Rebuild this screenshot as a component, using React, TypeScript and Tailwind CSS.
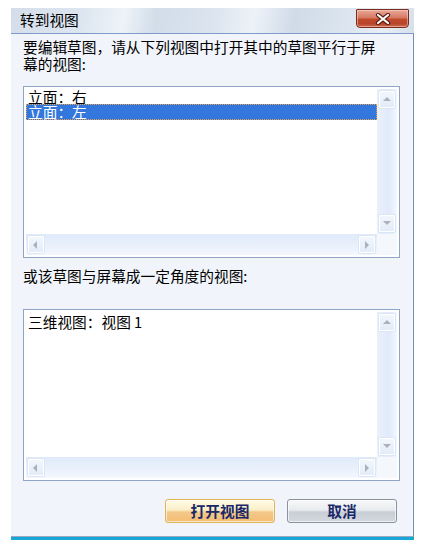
import React from "react";

const font = { fontFamily: '"Noto Sans CJK SC", "Noto Sans", sans-serif' };

function Arrow({ dir }: { dir: "up" | "down" | "left" | "right" }) {
  const pts =
    dir === "up"
      ? "1,6 5,2 9,6"
      : dir === "down"
      ? "1,2 5,6 9,2"
      : dir === "left"
      ? "6,1 2,5 6,9"
      : "3,1 7,5 3,9";
  return (
    <svg width="10" height="10" viewBox="0 0 10 10">
      <polygon points={pts} fill="#a9b1bd" />
    </svg>
  );
}

function SBtn({ dir }: { dir: "up" | "down" | "left" | "right" }) {
  return (
    <div className="w-[18px] h-[19px] rounded-[2px] border border-[#dbe6f5] bg-[linear-gradient(180deg,#f3f7fd_0%,#e2ebf8_100%)] shadow-[inset_0_0_0_1px_#ffffff] flex items-center justify-center">
      <Arrow dir={dir} />
    </div>
  );
}

function ListBox({ children }: { children: React.ReactNode }) {
  return (
    <div className="w-[377px] h-[172px] border border-[#8fa5c6] bg-white p-[2px] flex flex-col">
      <div className="flex flex-1 min-h-0">
        <div className="flex-1 flex flex-col">{children}</div>
        <div className="w-[20px] flex flex-col justify-between items-center bg-[linear-gradient(90deg,#eaf1fc_0%,#e0eafa_60%,#f4f8fe_100%)] py-[1px]">
          <SBtn dir="up" />
          <SBtn dir="down" />
        </div>
      </div>
      <div className="h-[21px] flex">
        <div className="flex-1 flex justify-between items-center px-[1px] bg-[linear-gradient(180deg,#e0eafa_0%,#eaf1fc_60%,#f4f8fe_100%)]">
          <SBtn dir="left" />
          <SBtn dir="right" />
        </div>
        <div className="w-[20px] bg-[#f4f7fb]" />
      </div>
    </div>
  );
}

export default function App() {
  return (
    <div className="w-[425px] h-[550px] bg-white pt-[8px] pl-[11px]" style={font}>
      <div className="w-[403px] flex flex-col">
        {/* title bar */}
        <div className="h-[26px] relative border-b border-[#7d9ccb] bg-[linear-gradient(100deg,#d4deea_0%,#dde6f0_18%,#eef3f8_28%,#d2dde9_36%,#dbe4ef_50%,#edf2f8_60%,#d0dbe8_70%,#dde6f0_84%,#e8eef5_92%,#d6e0eb_100%)]">
          <div className="pl-[9px] pt-[3px] text-[14.7px] leading-[18px] text-black">转到视图</div>
          <div className="absolute right-[5px] top-[1px] w-[53px] h-[19px] rounded-b-[4px] rounded-t-[1px] border border-[#7b2b1c] bg-[linear-gradient(180deg,#e7a899_0%,#d77a63_45%,#c04a2c_55%,#b8442a_80%,#cf6a4c_100%)] flex items-center justify-center shadow-[inset_0_0_0_1px_rgba(255,220,210,0.5)]">
            <svg width="16" height="12" viewBox="0 0 16 12">
              <path d="M3 2 L13 10 M13 2 L3 10" stroke="#5a1a10" strokeWidth="4.2" strokeLinecap="round" />
              <path d="M3 2 L13 10 M13 2 L3 10" stroke="#ffffff" strokeWidth="2.2" strokeLinecap="round" />
            </svg>
          </div>
        </div>
        {/* body */}
        <div className="h-[502px] bg-[#f1f5fb] border-r border-[#6f8fc2] pl-[12px] pt-[4px] flex flex-col">
          <div className="text-[14.7px] leading-[17px] text-black">
            要编辑草图，请从下列视图中打开其中的草图平行于屏
            <br />
            幕的视图:
          </div>
          <div className="mt-[14px]">
            <ListBox>
              <div className="h-[15px] text-[14.7px] leading-[15px] text-black pl-[2px] whitespace-nowrap">立面：右</div>
              <div className="h-[16px] text-[14.7px] leading-[14px] text-white bg-[#3377dd] border border-dotted border-[#e0a050] pl-[1px] whitespace-nowrap">立面：左</div>
            </ListBox>
          </div>
          <div className="mt-[10px] text-[14.7px] leading-[16px] text-black">或该草图与屏幕成一定角度的视图:</div>
          <div className="mt-[25px]">
            <ListBox>
              <div className="h-[15px] mt-[2px] text-[14.7px] leading-[15px] text-black pl-[2px] whitespace-nowrap">三维视图：视图 1</div>
            </ListBox>
          </div>
          <div className="mt-[18px] w-[374px] flex justify-end gap-[12px]">
            <div className="w-[110px] h-[24px] rounded-[3px] border border-[#e2b458] bg-[linear-gradient(180deg,#fefbe6_0%,#fbefc8_45%,#f2c88a_55%,#f5bd72_100%)] shadow-[inset_0_0_0_1px_rgba(255,255,255,0.6)] flex items-center justify-center text-[14.7px] font-semibold text-[#1a2868]">
              打开视图
            </div>
            <div className="w-[110px] h-[24px] rounded-[3px] border border-[#8a929c] bg-[linear-gradient(180deg,#f7f8f9_0%,#e9ecef_45%,#c9ced6_55%,#d3d8de_100%)] shadow-[inset_0_0_0_1px_rgba(255,255,255,0.6)] flex items-center justify-center text-[14.7px] font-semibold text-[#1a2868]">
              取消
            </div>
          </div>
        </div>
        <div className="h-[1px] bg-[#9aa6c0]" />
        <div className="h-[3px] bg-[#17a6d8]" />
      </div>
    </div>
  );
}
